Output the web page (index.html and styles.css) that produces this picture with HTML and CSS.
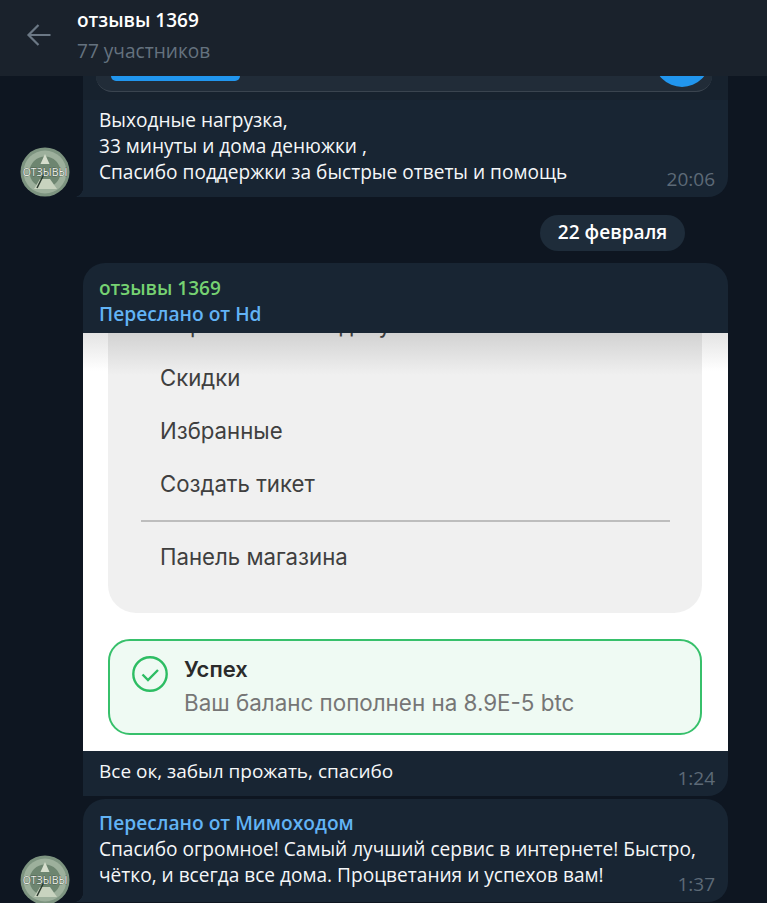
FILE: index.html
```html
<!DOCTYPE html>
<html lang="en">
<head>
    <meta charset="UTF-8">
    <title>отзывы 1369</title>
    <link rel="stylesheet" href="styles.css">
</head>
<body>

    <header class="topbar">
        <svg class="back" width="26" height="24" viewBox="0 0 26 24"><path d="M24.5 12H2.5M12.5 2 2.5 12l10 10" fill="none" stroke="#6b7885" stroke-width="2.2"/></svg>
        <div class="chat-title">
            <div class="chat-name">отзывы 1369</div>
            <div class="chat-count">77 участников</div>
        </div>
    </header>

    <main class="chat">

        <div class="row first">
            <div class="avatar-col">
                <svg class="avatar" width="50" height="50" viewBox="0 0 50 50">
                    <circle cx="25" cy="25" r="24.5" fill="#7d9480"/>
                    <circle cx="25" cy="25" r="21.5" fill="#9db09c"/>
                    <circle cx="25" cy="25" r="15.5" fill="#6d8570"/>
                    <path d="M25 7 29.5 17h-9z" fill="#d5ddcc"/>
                    <path d="M20 32h10l7 10H14z" fill="#c8d3bf"/>
                    <path d="M24 27 17 41" stroke="#2b3a2f" stroke-width="1.6"/>
                    <text class="avatar-text" x="25" y="29">ОТЗЫВЫ</text>
                </svg>
            </div>
            <div class="bubble tail">
                <div class="photo-dark">
                    <div class="dark-card">
                        <span class="blue-btn"></span>
                        <span class="blue-round"></span>
                    </div>
                </div>
                <div class="msg-body">
                    <p class="msg-text">Выходные нагрузка,<br>33 минуты и дома денюжки ,<br>Спасибо поддержки за быстрые ответы и помощь</p>
                    <span class="time">20:06</span>
                </div>
            </div>
        </div>

        <div class="date-row"><span class="date-pill">22 февраля</span></div>

        <div class="row">
            <div class="avatar-col"></div>
            <div class="bubble second">
                <div class="msg-head">
                    <div class="sender">отзывы 1369</div>
                    <div class="forward">Переслано от Hd</div>
                </div>
                <div class="shot">
                    <div class="menu">
                        <div class="menu-cut">Обратитесь в подачу</div>
                        <div class="menu-item">Скидки</div>
                        <div class="menu-item">Избранные</div>
                        <div class="menu-item">Создать тикет</div>
                        <div class="menu-line"></div>
                        <div class="menu-item">Панель магазина</div>
                    </div>
                    <div class="success">
                        <svg width="36" height="36" viewBox="0 0 36 36"><circle cx="18" cy="18" r="16.7" fill="none" stroke="#2dbd63" stroke-width="2.4"/><path d="M10.5 18.5 16 24l10-10" fill="none" stroke="#2dbd63" stroke-width="2.4"/></svg>
                        <div>
                            <div class="success-title">Успех</div>
                            <div class="success-text">Ваш баланс пополнен на 8.9E-5 btc</div>
                        </div>
                    </div>
                </div>
                <div class="caption">
                    <p class="caption-text">Все ок, забыл прожать, спасибо</p>
                    <span class="time">1:24</span>
                </div>
            </div>
        </div>

        <div class="row third">
            <div class="avatar-col">
                <svg class="avatar" width="50" height="50" viewBox="0 0 50 50">
                    <circle cx="25" cy="25" r="24.5" fill="#7d9480"/>
                    <circle cx="25" cy="25" r="21.5" fill="#9db09c"/>
                    <circle cx="25" cy="25" r="15.5" fill="#6d8570"/>
                    <path d="M25 7 29.5 17h-9z" fill="#d5ddcc"/>
                    <path d="M20 32h10l7 10H14z" fill="#c8d3bf"/>
                    <path d="M24 27 17 41" stroke="#2b3a2f" stroke-width="1.6"/>
                    <text class="avatar-text" x="25" y="29">ОТЗЫВЫ</text>
                </svg>
            </div>
            <div class="bubble tail last">
                <div class="forward">Переслано от Мимоходом</div>
                <p class="msg-text">Спасибо огромное! Самый лучший сервис в интернете! Быстро,<br>чётко, и всегда все дома. Процветания и успехов вам!</p>
                <span class="time">1:37</span>
            </div>
        </div>

    </main>

</body>
</html>
```

FILE: styles.css
```css
* { box-sizing: border-box; }
html, body { margin: 0; padding: 0; }
body { width: 767px; height: 903px; overflow: hidden; background-color: #0e1621; font-family: "Open Sans", sans-serif; color: #f5f7f9; }
p { margin: 0; }

.topbar { position: relative; z-index: 2; display: flex; height: 76px; background-color: #1a222c; padding-left: 26px; }
.back { margin-top: 23px; }
.chat-title { margin-left: 25px; padding-top: 8px; }
.chat-name { font-size: 19px; line-height: 24px; font-weight: 600; color: #fff; }
.chat-count { font-size: 19.1px; line-height: 24px; margin-top: 7px; color: #65727f; }

.row { display: flex; align-items: flex-end; }
.avatar-col { width: 83px; flex: none; padding-left: 20px; }
.avatar { display: block; }
.third .avatar { margin-bottom: -3px; }
.avatar-text { font-family: "Open Sans", sans-serif; font-size: 10.5px; fill: #eef2ea; stroke: #26332a; stroke-width: .5px; paint-order: stroke; text-anchor: middle; }

.bubble { position: relative; width: 645px; background-color: #182533; }
.tail::before { content: ""; position: absolute; left: -10px; bottom: 0; width: 10px; height: 10px; background: radial-gradient(circle at 0 0, transparent 10px, #182533 10.5px); }

.first .bubble { height: 121px; border-radius: 0 0 20px 0; }
.photo-dark { height: 24px; background-color: #17222e; overflow: hidden; }
.dark-card { position: relative; width: 616px; height: 16px; margin-left: 13px; background-color: #212c38; border-bottom: 1px solid #3a444f; border-radius: 0 0 18px 18px; }
.blue-btn { position: absolute; left: 15px; top: 0; width: 129px; height: 5px; background-color: #2196ee; border-radius: 0 0 14px 14px; }
.blue-round { position: absolute; left: 558px; top: -45px; width: 56px; height: 56px; background-color: #2196ee; border-radius: 50%; }

.msg-body { padding: 7px 16px 0; }
.msg-text { font-size: 19.1px; line-height: 26px; }
.time { position: absolute; right: 13px; bottom: 6px; font-size: 19px; line-height: 24px; color: #5d6a77; }

.date-row { display: flex; justify-content: flex-end; padding: 18px 82px 12px 0; }
.date-pill { width: 145px; height: 36px; line-height: 35px; text-align: center; font-size: 19.1px; font-weight: 600; background-color: #1e2c3a; border-radius: 18px; color: #fff; }

.second { border-radius: 22px 22px 20px 0; overflow: hidden; }
.msg-head { height: 70px; padding: 13px 16px 0; }
.sender { font-size: 19px; line-height: 24px; font-weight: 600; color: #76d272; }
.forward { font-size: 19.2px; line-height: 24px; font-weight: 600; color: #62b3f5; margin-top: 2px; }

.shot { height: 418px; padding: 0 26px 0 25px; background-color: #fff; background-image: linear-gradient(#e4e4e4, #fff 38px); font-family: Inter, sans-serif; overflow: hidden; }
.menu { height: 280px; padding: 0 32px 0 33px; background-color: #f0f0f0; background-image: linear-gradient(#d2d2d2, #f0f0f0 42px); border-radius: 0 0 28px 28px; margin-bottom: 26px; }
.menu-cut { display: flex; align-items: flex-end; height: 5px; margin-left: 19px; overflow: hidden; font-size: 22.2px; line-height: 27px; color: #3c3c3c; }
.menu-item { margin-left: 19px; height: 53px; font-size: 22.2px; line-height: 53px; color: #3f3f3f; }
.menu-cut + .menu-item { margin-top: 13px; }
.menu-line { height: 2px; margin: 10px 0 8px; background-color: #bdbdbd; }

.success { display: flex; gap: 16px; height: 96px; padding: 14px 22px; background-color: #effaf3; border: 2px solid #37c06b; border-radius: 22px; }
.success svg { flex: none; margin-top: 1px; }
.success-title { font-size: 22px; line-height: 28px; font-weight: 600; color: #2b2b2b; }
.success-text { font-size: 22.4px; line-height: 28px; margin-top: 6px; color: #767676; }

.caption { height: 45px; padding: 8px 16px 0; }
.caption-text { font-size: 19px; line-height: 24px; }

.third { margin-top: 3px; }
.last { height: 103px; border-radius: 22px 22px 20px 0; padding: 12px 16px 0; }
.last .forward { margin-top: 0; }
.last .msg-text { line-height: 26px; margin-top: 1px; }
```
